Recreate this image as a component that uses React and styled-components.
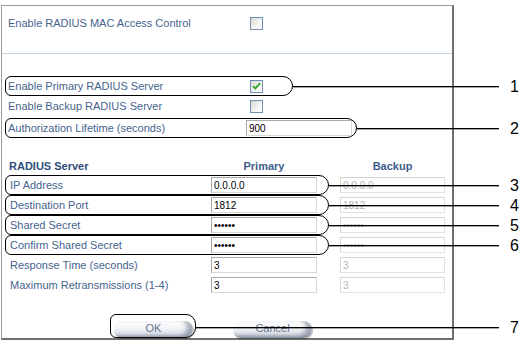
import React from "react";
import styled, { createGlobalStyle } from "styled-components";

const GlobalStyle = createGlobalStyle`
  body {
    margin: 0;
    background: #fff;
    font-family: "Liberation Sans", Arial, sans-serif;
  }
`;

const Page = styled.div`
  position: relative;
  width: 520px;
  height: 348px;
  padding: 5px 0 0 1px;
  box-sizing: border-box;
`;

const Panel = styled.div`
  width: 453px;
  height: 335px;
  box-sizing: border-box;
  border: 1px solid #9c9c9c;
  border-right: 2px solid #707070;
  border-bottom: 2px solid #707070;
  display: flex;
  flex-direction: column;
`;

const OptionRow = styled.div`
  position: relative;
  display: grid;
  grid-template-columns: 248px 1fr;
  align-items: center;
  height: 20px;
  margin-top: ${(p) => p.$top || 0}px;
`;

const Label = styled.span`
  padding-left: ${(p) => p.$indent || 6}px;
  font-size: 11px;
  color: #46648e;
  white-space: nowrap;
`;

const Separator = styled.div`
  height: 1px;
  margin-top: 20px;
  background: #c3d4e3;
`;

const Check = styled.span`
  width: 11px;
  height: 11px;
  border: 1px solid #6f8fb3;
  background: linear-gradient(135deg, #d9d9d4 0%, #f4f4f2 60%, #ffffff 100%);
  display: flex;
  align-items: center;
  justify-content: center;
`;

const TextBox = styled.input`
  box-sizing: border-box;
  width: ${(p) => p.$w || 106}px;
  height: 16px;
  margin-left: ${(p) => p.$shift || 0}px;
  padding: 0 2px;
  border: 1px solid;
  border-color: ${(p) =>
    p.disabled ? "#d8d6cc #e4e2da #e4e2da #d8d6cc" : "#a9a9a9 #d9d9d2 #d9d9d2 #a9a9a9"};
  background: #fff;
  font-family: "Liberation Sans", Arial, sans-serif;
  font-size: 10px;
  color: ${(p) => (p.disabled ? "#b4b4b4" : "#000")};
  outline: none;
`;

const TableRow = styled.div`
  position: relative;
  display: grid;
  grid-template-columns: 209px 106px 23px 105px;
  align-items: center;
  height: ${(p) => p.$h || 20}px;
  margin-top: ${(p) => p.$top || 0}px;

  & > :nth-child(3) {
    grid-column: 4;
  }
`;

const Heading = styled.span`
  font-size: 11px;
  font-weight: bold;
  color: ${(p) => (p.$dark ? "#2f4d7a" : "#3d5c8c")};
  text-align: ${(p) => p.$align || "left"};
  padding-left: ${(p) => p.$indent || 0}px;
`;

const ButtonBar = styled.div`
  display: flex;
  gap: 40px;
  margin-top: 23px;
  padding-left: 112px;
`;

const ButtonWrap = styled.div`
  position: relative;
`;

const GlossButton = styled.button`
  width: 79px;
  height: 17px;
  border: none;
  border-radius: 8px 9px 9px 8px;
  background: linear-gradient(180deg, #ffffff 0%, #f3f5f8 40%, #dde2ea 75%, #b0b8c4 100%);
  box-shadow: inset -6px -2px 4px rgba(90, 100, 120, 0.5), 1px 1px 1px rgba(0, 0, 0, 0.3);
  font-family: "Liberation Sans", Arial, sans-serif;
  font-size: 11px;
  color: #66758c;
  padding: 0 0 2px;
`;

const Pill = styled.div`
  position: absolute;
  left: ${(p) => p.$left}px;
  top: ${(p) => p.$top}px;
  width: ${(p) => p.$w}px;
  height: ${(p) => p.$h}px;
  box-sizing: border-box;
  border: 1px solid #000;
  border-radius: 6px 10px 10px 6px;
  pointer-events: none;
`;

const Leader = styled.div`
  position: absolute;
  left: ${(p) => p.$from}px;
  width: ${(p) => p.$len}px;
  top: ${(p) => p.$y}px;
  height: 1px;
  background: #000;
  box-shadow: 0 1px 0 rgba(0, 0, 0, 0.35);
  z-index: 2;
`;

const Num = styled.span`
  position: absolute;
  left: ${(p) => p.$x}px;
  top: ${(p) => p.$y}px;
  transform: translateY(-50%);
  font-family: "Liberation Sans", Arial, sans-serif;
  font-size: 16px;
  line-height: 1;
  color: #000;
`;

/* callout coordinates are relative to the row; the row starts at x=2 */
function Callout({ n, width, left = 3, top = 0, height = 20, lineY, endX = 497, numX = 508 }) {
  const right = left + width;
  const mid = lineY ?? top + height / 2;
  return (
    <>
      <Pill $left={left} $top={top} $w={width} $h={height} />
      <Leader $from={right} $len={endX - right} $y={mid} />
      <Num $x={numX} $y={mid + 1}>
        {n}
      </Num>
    </>
  );
}

function CheckMark() {
  return (
    <svg width="9" height="8" viewBox="0 0 9 8">
      <path d="M1 4.2 L3.4 6.5 L8 1.2" fill="none" stroke="#2aa52a" strokeWidth="1.8" />
    </svg>
  );
}

const radiusRows = [
  { label: "IP Address", primary: "0.0.0.0", backup: "0.0.0.0", n: 3 },
  { label: "Destination Port", primary: "1812", backup: "1812", n: 4 },
  { label: "Shared Secret", primary: "secret", backup: "secret", n: 5, secret: true },
  { label: "Confirm Shared Secret", primary: "secret", backup: "secret", n: 6, secret: true },
  { label: "Response Time (seconds)", primary: "3", backup: "3" },
  { label: "Maximum Retransmissions (1-4)", primary: "3", backup: "3" },
];

export default function App() {
  return (
    <Page>
      <GlobalStyle />
      <Panel>
        <OptionRow $top={7}>
          <Label>Enable RADIUS MAC Access Control</Label>
          <Check />
        </OptionRow>
        <Separator />
        <OptionRow $top={22}>
          <Label>Enable Primary RADIUS Server</Label>
          <Check>
            <CheckMark />
          </Check>
          <Callout n={1} width={288} />
        </OptionRow>
        <OptionRow>
          <Label>Enable Backup RADIUS Server</Label>
          <Check />
        </OptionRow>
        <OptionRow $top={2}>
          <Label>Authorization Lifetime (seconds)</Label>
          <TextBox defaultValue="900" $shift={-4} />
          <Callout n={2} width={352} />
        </OptionRow>

        <TableRow $h={18} $top={19}>
          <Heading $dark $indent={7}>
            RADIUS Server
          </Heading>
          <Heading $align="center">Primary</Heading>
          <Heading $align="center">Backup</Heading>
        </TableRow>
        {radiusRows.map((r) => (
          <TableRow key={r.label}>
            <Label $indent={8}>{r.label}</Label>
            <TextBox type={r.secret ? "password" : "text"} defaultValue={r.primary} />
            <TextBox
              type={r.secret ? "password" : "text"}
              defaultValue={r.backup}
              $w={105}
              disabled
            />
            {r.n && <Callout n={r.n} width={324} />}
          </TableRow>
        ))}

        <ButtonBar>
          <ButtonWrap>
            <GlossButton>OK</GlossButton>
            <Callout
              n={7}
              left={-4}
              top={-4}
              width={86}
              height={24}
              lineY={9}
              endX={385}
              numX={396}
            />
          </ButtonWrap>
          <ButtonWrap>
            <GlossButton>Cancel</GlossButton>
          </ButtonWrap>
        </ButtonBar>
      </Panel>
    </Page>
  );
}
